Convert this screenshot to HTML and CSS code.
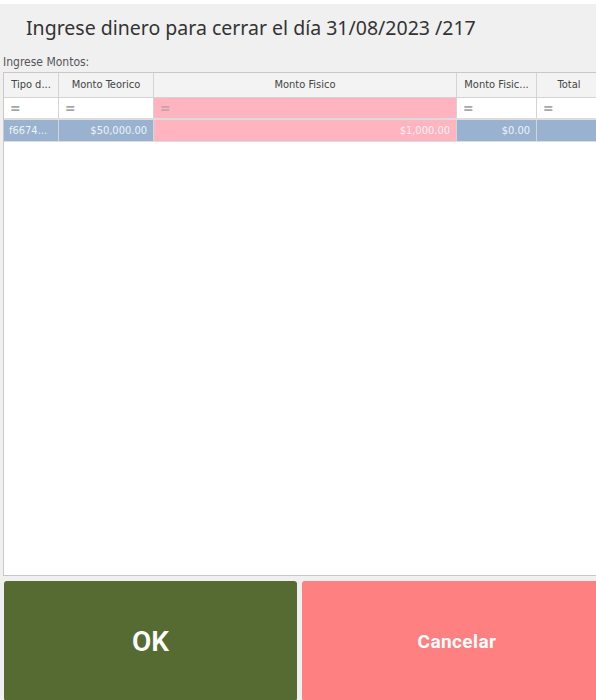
FILE: index.html
```html
<!DOCTYPE html>
<html lang="es">
<head>
<meta charset="utf-8">
<title>Cierre del día</title>
<link rel="stylesheet" href="styles.css">
</head>
<body>
<div class="window">
  <div class="topstrip"></div>
  <h1 class="title">Ingrese dinero para cerrar el día 31/08/2023 /217</h1>
  <div class="label">Ingrese Montos:</div>
  <div class="grid">
    <div class="row head">
      <div class="cell">Tipo d...</div>
      <div class="cell">Monto Teorico</div>
      <div class="cell">Monto Fisico</div>
      <div class="cell">Monto Fisic...</div>
      <div class="cell">Total</div>
    </div>
    <div class="row filter">
      <div class="cell">=</div>
      <div class="cell">=</div>
      <div class="cell pink">=</div>
      <div class="cell">=</div>
      <div class="cell">=</div>
    </div>
    <div class="row data">
      <div class="cell left">f6674...</div>
      <div class="cell">$50,000.00</div>
      <div class="cell pink">$1,000.00</div>
      <div class="cell">$0.00</div>
      <div class="cell"></div>
    </div>
    <div class="empty"></div>
  </div>
  <div class="buttons">
    <button class="btn ok">OK</button>
    <button class="btn cancel">Cancelar</button>
  </div>
</div>
</body>
</html>
```
FILE: styles.css
```css
* { box-sizing: border-box; }
html, body {
  margin: 0;
  padding: 0;
  width: 596px;
  height: 700px;
  overflow: hidden;
  background: #f0f0f0;
}
.window {
  width: 596px;
  height: 700px;
  display: flex;
  flex-direction: column;
  overflow: hidden;
}
.topstrip {
  height: 4px;
  background: #ffffff;
  flex: none;
}
.title {
  margin: 0;
  padding: 10px 0 0 26px;
  height: 50px;
  font-family: "Noto Sans", "Open Sans", sans-serif;
  font-weight: normal;
  font-size: 19.5px;
  line-height: 28px;
  color: #333333;
  flex: none;
}
.label {
  padding-left: 3px;
  height: 18px;
  font-family: "DejaVu Sans Condensed", "DejaVu Sans", sans-serif;
  font-size: 12px;
  line-height: 16px;
  color: #555555;
  flex: none;
}
.grid {
  margin-left: 3px;
  width: 600px;
  height: 504px;
  border: 1px solid #c8c8c8;
  background: #ffffff;
  display: flex;
  flex-direction: column;
  flex: none;
  font-family: "DejaVu Sans Condensed", "DejaVu Sans", sans-serif;
  font-size: 11px;
}
.row {
  display: grid;
  grid-template-columns: 55px 95px 303px 80px 1fr;
  flex: none;
}
.cell {
  border-right: 1px solid #d4d4d4;
  white-space: nowrap;
  overflow: hidden;
}
.head {
  height: 25px;
  background: #f3f3f3;
  border-bottom: 1px solid #d4d4d4;
}
.head .cell {
  text-align: center;
  line-height: 24px;
  color: #444444;
}
.filter {
  height: 22px;
  border-bottom: 2px solid #dcdcdc;
}
.filter .cell {
  line-height: 20px;
  padding-left: 6px;
  color: #a8a8a8;
  background: #ffffff;
  font-size: 14px;
  font-weight: bold;
}
.filter .cell.pink {
  background: #ffb4c0;
  color: #c8a4ab;
}
.data {
  height: 22px;
  border-bottom: 1px solid #dcdcdc;
}
.data .cell {
  background: #98b2cf;
  color: #eef2f8;
  line-height: 21px;
  text-align: right;
  padding-right: 6px;
}
.data .cell.left {
  text-align: left;
  padding-left: 5px;
}
.data .cell.pink {
  background: #ffb4c0;
  color: #fff2f4;
}
.empty {
  flex: 1;
}
.buttons {
  display: flex;
  gap: 5px;
  margin-top: 5px;
  padding-left: 4px;
  flex: none;
  width: 620px;
}
.btn {
  flex: none;
  border: none;
  border-radius: 3px;
  height: 120px;
  color: #ffffff;
  font-family: Roboto, "Liberation Sans", sans-serif;
  font-weight: bold;
  padding: 0;
}
.ok {
  width: 293px;
  background: #566b31;
  font-size: 28px;
  font-weight: 600;
}
.cancel {
  width: 310px;
  background: #ff8080;
  font-size: 19px;
  letter-spacing: 0.4px;
}
```
